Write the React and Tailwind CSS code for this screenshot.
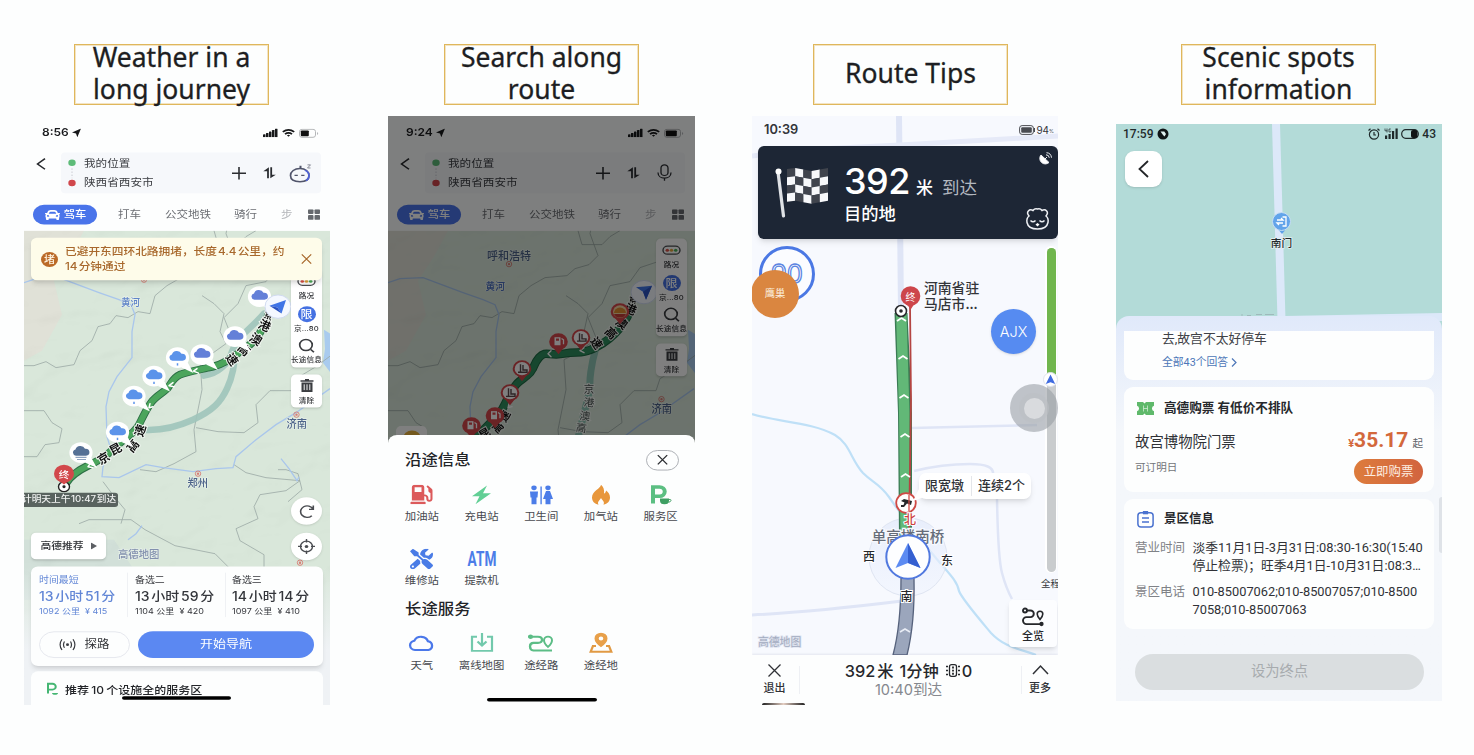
import React from "react";
import { FaCar, FaGasPump, FaTools } from "react-icons/fa";

const CN = "font-['Inter','Noto_Sans_CJK_SC',sans-serif]";
const ROBOTO = "font-['Roboto','Noto_Sans_CJK_SC',sans-serif]";
const MAP_FONT = "'Noto Sans CJK SC', sans-serif";

function Title({ children, className }) {
  return (
    <h2
      className={
        "flex h-[61px] w-[195px] items-center justify-center border border-[#dfb75c] pb-[3px] text-center font-['Noto_Sans'] text-[26.500px] leading-[32px] whitespace-nowrap text-[#1d1e22] shadow-[inset_0_0_0_1px_rgba(230,198,124,0.45)] [-webkit-text-stroke:0.3px_#1d1e22] " +
        className
      }
    >
      {children}
    </h2>
  );
}

/* ---------- shared pieces of the route planner ---------- */

function Battery({ level }) {
  return (
    <svg width="20" height="11" viewBox="0 0 20 11">
      <rect x="0.5" y="1" width="16" height="9" rx="2.5" fill="none" stroke="#b0b2b5" strokeWidth="1" />
      <rect x="1.8" y="2.3" width={level} height="6.4" rx="1" fill="#111" />
      <path d="M18 4v3.4q1.2-.6 1.2-1.7T18 4" fill="#b5b7ba" />
    </svg>
  );
}

function PlannerHeader({ time, level, last }) {
  return (
    <header className="bg-[#fdfefe]">
      <div className="flex h-[38px] items-center pl-[18px] pr-[11px]">
        <span className="text-[12px] font-semibold text-[#1b1c1f]">{time}</span>
        <svg className="ml-[3px]" width="9" height="10" viewBox="0 0 9 10" fill="#17181a">
          <path d="M9 0 5.300 10 4 5.600 0 4.500z" />
        </svg>
        <div className="ml-auto flex items-center gap-[4px]">
          <svg width="15" height="10" viewBox="0 0 15 10" fill="#17181a">
            <rect x="0" y="6.500" width="2.500" height="3.500" rx=".5" />
            <rect x="3" y="5" width="2.500" height="5" rx=".5" />
            <rect x="6" y="3.500" width="2.500" height="6.500" rx=".5" />
            <rect x="9" y="1.700" width="2.500" height="8.300" rx=".5" />
            <rect x="12" y="0" width="2.500" height="10" rx=".5" />
          </svg>
          <svg width="13" height="10" viewBox="0 0 13 9" fill="none" stroke="#17181a" strokeWidth="1.900">
            <path d="M.8 3.300Q6.500-1.300 12.200 3.300M3 5.800Q6.500 3 10 5.800" />
            <path d="M4.900 7.200Q6.500 6 8.100 7.200L6.500 8.900z" fill="#17181a" stroke="none" />
          </svg>
          <Battery level={level} />
        </div>
      </div>
      <div className="mt-[3px] flex pl-[12px]">
        <svg className="mt-[6px] mr-[15px]" width="10" height="14" viewBox="0 0 10 14" fill="none" stroke="#26282c" strokeWidth="1.600">
          <path d="M9 1 1.500 7 9 13" />
        </svg>
        <div className="flex h-[46px] w-[260px] items-center rounded-[4px] bg-[#f6f8fb]">
          <svg className="ml-[7px]" width="8" height="32" viewBox="0 0 8 32">
            <circle cx="4" cy="4.700" r="3.700" fill="#5dbb78" />
            <path d="M4 11v11" stroke="#c3c6cc" strokeWidth="1" strokeDasharray="1.500 2" />
            <circle cx="4" cy="27.500" r="3.700" fill="#d0474c" />
          </svg>
          <div className="ml-[8px] text-[11.600px] leading-[22.500px] text-[#3b3d42]">
            <div>我的位置</div>
            <div>陕西省西安市</div>
          </div>
          <div className="ml-auto flex items-center pr-[9px] text-[#2b2d31]">
            <svg width="14" height="15" viewBox="0 0 14 15" stroke="currentColor" strokeWidth="1.600">
              <path d="M7 .500v14M0 7.500h14" />
            </svg>
            <svg className="ml-[17px]" width="13" height="14" viewBox="0 0 13 14" fill="currentColor">
              <path d="M5.900 .800v12.400H4.100V5.200H.300zM7.300 .800h1.800v8.200h3.700l-5.500 4.200z" />
            </svg>
            {last === "robot" ? (
              <svg className="ml-[13px]" width="23" height="23" viewBox="0 0 23 23" fill="none">
                <path d="M11 6C16.500 6 20 9.500 20 14S17.500 21 11 21 1.500 18.500 1.500 14 5.500 6 11 6z" stroke="#50546a" strokeWidth="1.700" />
                <path d="M16 8c2.600 1.400 4 3.500 4 6.200 0 2.600-1 4.300-3 5.500" stroke="#4f62d8" strokeWidth="1.700" />
                <path d="M11.500 5.500V3" stroke="#50546a" strokeWidth="2" />
                <path d="M5.500 13.800h3.300M12.200 13.800h3.300" stroke="#50546a" strokeWidth="1.500" />
                <path d="M18.500 2h3l-3 3.500h3" stroke="#777a88" strokeWidth=".9" />
              </svg>
            ) : (
              <svg className="mr-[4px] ml-[17px]" width="15" height="20" viewBox="0 0 15 20" fill="none" stroke="currentColor" strokeWidth="1.300">
                <rect x="4" y="1" width="7" height="12" rx="3.500" />
                <path d="M1 9.500c0 4 2.800 6.500 6.500 6.500s6.500-2.500 6.500-6.500M7.500 16v3" />
              </svg>
            )}
          </div>
        </div>
      </div>
      <nav className="mt-[13px] flex h-[29.400px] items-start pl-[9px] text-[11.500px] leading-[22px] text-[#6b6e73]">
        <div className="flex h-[22px] w-[64px] items-center justify-center gap-[3px] rounded-full bg-[#4a74ea] font-medium text-white">
          <FaCar className="h-[15px] w-[17px]" />
          <span className="text-[11.300px]">驾车</span>
        </div>
        <span className="ml-[21px]">打车</span>
        <span className="ml-[24px]">公交地铁</span>
        <span className="ml-[23px]">骑行</span>
        <span className="ml-[24px] text-[#b4b6ba]">步</span>
        <svg className="mt-[5px] ml-[15px]" width="12" height="12" viewBox="0 0 12 12" fill="#66696e">
          <rect width="5.500" height="5.300" rx="1" />
          <rect x="6.500" width="5.500" height="5.300" rx="1" />
          <rect y="6.500" width="5.500" height="5.300" rx="1" />
          <rect x="6.500" y="6.500" width="5.500" height="5.300" rx="1" />
        </svg>
      </nav>
    </header>
  );
}

function ToolRail({ className }) {
  return (
    <div className={"absolute w-[31px] text-center text-[7.700px] font-medium text-[#2e3034] " + className}>
      <div className="flex h-[110px] flex-col items-center rounded-[5px] bg-white shadow-sm">
        <svg className="mt-[7px]" width="19" height="12" viewBox="0 0 19 12">
          <rect x="1" y="1.500" width="17" height="9" rx="4.500" fill="#fff" stroke="#4a4c50" strokeWidth="1.400" />
          <circle cx="5.300" cy="6" r="1.700" fill="#dd5348" />
          <circle cx="9.500" cy="6" r="1.700" fill="#e5a53c" />
          <circle cx="13.700" cy="6" r="1.700" fill="#4cae5a" />
        </svg>
        <div className="mt-[5px] leading-[12px]">路况</div>
        <div className="mt-[5px] flex h-[18px] w-[18px] items-center justify-center rounded-full bg-[#4571e2] text-[12px] text-white">限</div>
        <div className="mt-[1px] leading-[13px] tracking-[0.200px]">京…80</div>
        <svg className="mt-[4px]" width="17" height="17" viewBox="0 0 16 16" fill="none" stroke="#3b3d41" strokeWidth="1.600">
          <circle cx="7.500" cy="7.300" r="5.900" />
          <path d="m12 12 3 3" />
        </svg>
        <div className="mt-[2px] leading-[12px] whitespace-nowrap">长途信息</div>
      </div>
      <div className="mt-[8px] flex h-[37px] flex-col items-center rounded-[5px] bg-white shadow-sm">
        <svg className="mt-[5px]" width="14" height="15" viewBox="0 0 14 15" fill="#3b3d41">
          <path d="M5 0h4v1.500h4.500V3H.500V1.500H5zM1.500 4h11v10.500h-11z" />
          <path d="M4.200 6v6.500M7 6v6.500M9.800 6v6.500" stroke="#fff" strokeWidth="1" />
        </svg>
        <div className="mt-[4px] leading-[12px]">清除</div>
      </div>
    </div>
  );
}

function ReliefFilter({ id, seed }) {
  return (
    <filter id={id} x="0" y="0" width="100%" height="100%">
      <feTurbulence type="fractalNoise" baseFrequency="0.018 0.028" numOctaves="3" seed={seed} />
      <feDiffuseLighting surfaceScale="5" diffuseConstant="1.150" lightingColor="#ffffff">
        <feDistantLight azimuth="225" elevation="60" />
      </feDiffuseLighting>
    </filter>
  );
}

/* Provincial borders and rivers of the northern China base map, x measured from the phone's left edge */
function BaseMap({ filter }) {
  return (
    <g>
      <rect x="0" y="231" width="308" height="474" fill="#d9e7da" />
      <path d="M0 231h60l-14 26-16 24 8 34-20 36-18 10z" fill="#e2ded6" opacity=".7" />
      <path d="M0 540h90l40 60H0z" fill="#cbdad7" opacity=".5" />
      <rect x="0" y="231" width="308" height="474" filter={"url(#" + filter + ")"} opacity=".15" style={{ mixBlendMode: "multiply" }} />
      <path d="M300 330l8 5v40l-9-12 2-14z" fill="#a9cbee" />
      <g fill="none" stroke="#9aa8a4" strokeWidth=".8">
        <path d="M0 366l10 0 12-4 10 6 18-3 6-14 12-10 6-14 12-3 6-8 12 2 10-6 12 2 5-18 12-10 14-8 22-2 8-7 14-4 9-9-8-22 4-20" />
        <path d="M0 411h20l8 12 10 6-3 14-14 2-8 12H0" />
        <path d="M178 296l12 8 10 10-4 18 6 12-14 10-12 6 2 30-8 40 2 22-22 12-18 8-16-2" />
        <path d="M208 338l-8-20 14-14 8-18 20-4 10-14 24-8 12-18" />
        <path d="M172 428l22 4 26 1 14-10-2-18 14-14 22 0 4-12 20-12 16-12" />
        <path d="M210 465l12 8 20 5 34 3-14 10-26 4-6 12 4 12-22 10 4 12 24 14v34" />
        <path d="M55 524l10-4 42 0 14 10 30 16 40 8 14 14 20 2" />
        <path d="M79 482l12 16 10 12-4 14" />
        <path d="M254 470l8 0 12 4 4 16-14 12M190 231l4 14 20 0 8-8 10-6" />
      </g>
      <g fill="none" stroke="#a9c6ec" strokeWidth="1.300">
        <path d="M0 283l12-4 23-1 24 9 16 6 20 7 12 5 4 10-3 17v26l-15 19-8 15-3 15 1 30 4 13-8 17-1 10 17 1 27-13 17 3 30 4 23-3 17-1 3-11 20-17 20-15 20-12 34-24" />
        <path d="M257 459l8 10 8 12 2-4M104 540l8-6 6-8" />
      </g>
    </g>
  );
}

function MapLabel({ x, y, w, children, fill = "#4c6389", size = 11 }) {
  return (
    <text x={x} y={y} textLength={w} lengthAdjust="spacingAndGlyphs" fontSize={size} fill={fill} fontFamily={MAP_FONT} fontWeight="500" stroke="#e8f1ea" strokeWidth="1.200" paintOrder="stroke">
      {children}
    </text>
  );
}

function City({ x, y }) {
  return (
    <g fill="none" stroke="#d77a72">
      <circle cx={x} cy={y} r="2.700" strokeWidth=".9" />
      <circle cx={x} cy={y} r=".7" strokeWidth="1" />
    </g>
  );
}

function RoadGlyph({ x, y, r = 0, children, size = 12, light = false }) {
  return (
    <text
      transform={"translate(" + x + " " + y + ") rotate(" + r + ")"}
      textAnchor="middle"
      dominantBaseline="central"
      fontSize={size}
      fontWeight={light ? "400" : "700"}
      fill={light ? "#4b5553" : "#111"}
      stroke="#f2f7f2"
      strokeWidth="2"
      paintOrder="stroke"
      fontFamily={MAP_FONT}
    >
      {children}
    </text>
  );
}

function WeatherBubble({ x, y, kind }) {
  const fill = kind === "cloud" ? "#6480d8" : kind === "fog" ? "#557095" : "#5b93ea";
  return (
    <g transform={"translate(" + x + " " + y + ") scale(1 .9)"}>
      <path d="M4 11 16 17 10 5z" fill="#fff" />
      <circle r="11.600" fill="#fff" />
      <path d="M-5 3.500a3.600 3.600 0 0 1-.5-7A5 5 0 0 1 4-4.300 3.900 3.900 0 0 1 5 3.500z" fill={fill} />
      {kind === "rain" && <path d="M0 6.200v2.600" stroke={fill} strokeWidth="1.500" />}
      {kind === "fog" && <path d="M-5.500 5.200h11M-4 7.600h9" stroke="#8ea2bf" strokeWidth="1.200" />}
    </g>
  );
}

function HeadingMarker({ x, y }) {
  return (
    <g transform={"translate(" + x + " " + y + ") scale(1 .9)"}>
      <circle r="13" fill="#f4f8ff" stroke="#cfd9ef" strokeWidth="1" />
      <path d="M-8.500-1 8-7.500 3.500 7.500-.5 1z" fill="#3f74e6" />
      <path d="M-8.500-1 3.500 7.500-.5 1z" fill="#2a52c0" />
    </g>
  );
}

/* ---------- phone 1 : weather ---------- */

function WeatherMap() {
  const route =
    "M245 313C240 328 234 340 222 348s-20 16-33 19-26 5-33 8-9 9-12 13-12 8-17 15-8 14-12 22-16 15-23 22-13 11-20 15-24 10-30 22";
  return (
    <svg className="absolute inset-0 h-full w-full" viewBox="0 231 306 474" preserveAspectRatio="none">
      <defs>
        <ReliefFilter id="relief-a" seed={4} />
      </defs>
      <BaseMap filter="relief-a" />
      <MapLabel x={97} y={306.500} w={19} fill="#5f83c8" size={10}>黄河</MapLabel>
      <City x={120} y={280} />
      <City x={126} y={377} />
      <City x={174} y={474} />
      <MapLabel x={163.500} y={487.500} w={20.500}>郑州</MapLabel>
      <City x={272.500} y={415} />
      <MapLabel x={262.500} y={428.500} w={20.500}>济南</MapLabel>
      <City x={276} y={563} />
      <g fill="none" strokeLinecap="round" strokeLinejoin="round">
        <path d="M240 314C226 330 212 338 208 352c-3 12-14 22-28 24M211 350c0 12-2 26-8 39s-14 22-34 31-36 11-50 10" stroke="#9fc4ba" strokeWidth="6.500" opacity=".9" />
        <path d={route} stroke="#2c6e45" strokeWidth="7.800" />
        <path d={route} stroke="#4ba55c" strokeWidth="6" />
        <path d="M173 369l-3.500 2.500 5 2M149 383l-4 3 5 1M126 404l-1 4 4-1M67 463l-3 4 5 1" stroke="#fff" strokeWidth="1.500" />
      </g>
      <RoadGlyph x={244.500} y={316} r={20} size={9}>京</RoadGlyph>
      <RoadGlyph x={241} y={325} r={25}>港</RoadGlyph>
      <RoadGlyph x={232.500} y={338.500} r={32}>澳</RoadGlyph>
      <RoadGlyph x={221} y={349} r={42}>高</RoadGlyph>
      <RoadGlyph x={209} y={359} r={55}>速</RoadGlyph>
      <RoadGlyph x={79} y={457.500} r={-32}>京</RoadGlyph>
      <RoadGlyph x={91} y={448.500} r={-28}>昆</RoadGlyph>
      <RoadGlyph x={108} y={445.500} r={-50}>高</RoadGlyph>
      <RoadGlyph x={115} y={430.500} r={-72}>速</RoadGlyph>
      <WeatherBubble x={235.500} y={297} kind="cloud" />
      <WeatherBubble x={211} y={337} kind="cloud" />
      <WeatherBubble x={178} y={355} kind="cloud" />
      <WeatherBubble x={153.500} y={358} kind="rain" />
      <WeatherBubble x={130} y={376.500} kind="rain" />
      <WeatherBubble x={110} y={396.500} kind="rain" />
      <WeatherBubble x={93.500} y={432.500} kind="rain" />
      <WeatherBubble x={57} y={453} kind="fog" />
      <HeadingMarker x={254} y={307} />
      <g transform="translate(40 474) scale(1 .9)">
        <circle cy="14.500" r="5.500" fill="#fff" stroke="#222" strokeWidth="1.400" />
        <circle cy="14.500" r="1.600" fill="#222" />
        <path d="M0 12-6 7h12z" fill="#d2484b" />
        <circle r="10" fill="#d2484b" />
        <text textAnchor="middle" dominantBaseline="central" fontSize="10.500" fontWeight="500" fill="#fff" fontFamily={MAP_FONT}>终</text>
      </g>
      <MapLabel x={94} y={558.500} w={41.500} fill="#8290ae" size={10.500}>高德地图</MapLabel>
    </svg>
  );
}

function RouteOption({ className, label, time, sub }) {
  return (
    <div className={"whitespace-nowrap " + className}>
      <div className="text-[9.900px] leading-[16px]">{label}</div>
      <div className="text-[14px] leading-[22px] font-medium [word-spacing:-2px]">{time}</div>
      <div className="text-[9px] leading-[12px]">{sub}</div>
    </div>
  );
}

function WeatherPhone() {
  return (
    <div className="h-[589px] w-[306px] overflow-hidden">
      <div className={"flex h-[663px] w-[306px] origin-top scale-y-[0.8885] flex-col " + CN}>
        <PlannerHeader time="8:56" level={8} last="robot" />
        <div className="relative flex-1 overflow-hidden">
          <WeatherMap />
          <ToolRail className="top-[44px] left-[267px]" />
          <div className="absolute top-[8px] left-[7px] flex h-[48px] w-[291px] items-center rounded-[6px] bg-[#fefcea] pr-[10px] pl-[10px] text-[#a8682c] shadow-md">
            <div className="flex h-[17px] w-[17px] items-center justify-center rounded-full bg-[#bb6a28] text-[11px] font-medium text-[#fff6e4]">堵</div>
            <p className="ml-[7px] text-[11.700px] leading-[17.500px] font-medium whitespace-nowrap [word-spacing:-2px]">
              已避开东四环北路拥堵，长度 4.4 公里，约
              <br />
              14 分钟通过
            </p>
            <svg className="ml-auto" width="11" height="12" viewBox="0 0 11 12" stroke="#a8682c" strokeWidth="1.200">
              <path d="m.8.800 9.400 10.400M10.200.800.8 11.200" />
            </svg>
          </div>
          <div className="absolute top-[295px] left-0 h-[16px] w-[94px] overflow-hidden rounded-r-[3px] bg-[#59635f] text-[9.700px] leading-[15.500px] font-medium whitespace-nowrap text-[#f1f3f2] [word-spacing:-2px]">
            <span className="-ml-[2px]">计明天上午 10:47 到达</span>
          </div>
          <div className="absolute top-[340px] left-[7px] flex h-[30px] w-[75px] items-center justify-center gap-[7px] rounded-[5px] bg-white text-[10.800px] font-medium text-[#2d2f33] shadow-sm">
            高德推荐
            <svg width="6" height="8" viewBox="0 0 6 8" fill="#5c5f64">
              <path d="M0 0v8l6-4z" />
            </svg>
          </div>
          <div className="absolute top-[300px] left-[267px] flex h-[31px] w-[31px] items-center justify-center rounded-full bg-white shadow-sm">
            <svg width="16" height="16" viewBox="0 0 16 16" fill="none" stroke="#4a4c51" strokeWidth="1.600">
              <path d="M12.800 12.800A6.500 6.500 0 1 1 14 5.500M14.300 1.500v4.200h-4.300" />
            </svg>
          </div>
          <div className="absolute top-[340px] left-[267px] flex h-[31px] w-[31px] items-center justify-center rounded-full bg-white shadow-sm">
            <svg width="17" height="17" viewBox="0 0 17 17" fill="none" stroke="#4a4c51" strokeWidth="1.400">
              <circle cx="8.500" cy="8.500" r="6" />
              <path d="M8.500 0v4M8.500 13v4M0 8.500h4M13 8.500h4" />
              <circle cx="8.500" cy="8.500" r="1.800" fill="#4a4c51" stroke="none" />
            </svg>
          </div>
          <div className="absolute inset-x-0 bottom-0 flex flex-col bg-linear-to-b from-transparent to-[#eff2f5] to-60% px-[7px]">
            <section className="h-[112px] rounded-[7px] bg-[#fdfefe] pt-[7px] shadow-md">
              <div className="grid grid-cols-[96px_98px_97px] text-[#34363b]">
                <RouteOption className="pl-[8px] text-[#6186d6]" label="时间最短" time="13 小时 51 分" sub={"1092 公里 \u00a0¥ 415"} />
                <RouteOption className="border-l border-[#eff1f4] pl-[7px]" label="备选二" time="13 小时 59 分" sub={"1104 公里 \u00a0¥ 420"} />
                <RouteOption className="border-l border-[#eff1f4] pl-[6px]" label="备选三" time="14 小时 14 分" sub={"1097 公里 \u00a0¥ 410"} />
              </div>
              <div className="mt-[16px] flex gap-[8px] px-[8px]">
                <button className="flex h-[30px] w-[91px] items-center justify-center gap-[8px] rounded-full border border-[#e4e7ed] text-[12.500px] text-[#303236]">
                  <svg width="17" height="14" viewBox="0 0 17 14" fill="none" stroke="#3b3d42" strokeWidth="1.200">
                    <circle cx="8.500" cy="7" r="1.500" fill="#3b3d42" stroke="none" />
                    <path d="M5.500 3.500Q3.500 7 5.500 10.500M11.500 3.500q2 3.500 0 7M3 1Q-.8 7 3 13M14 1q3.800 6 0 12" />
                  </svg>
                  探路
                </button>
                <button className="h-[30px] w-[176px] rounded-full bg-[#5b88f2] text-[13px] text-white">开始导航</button>
              </div>
            </section>
            <section className="relative mt-[6px] flex h-[38px] rounded-t-[7px] bg-[#fdfefe] pt-[12px] pl-[15px]">
              <svg width="13" height="16" viewBox="0 0 13 16" fill="none" stroke="#45b673" strokeWidth="2">
                <path d="M2 13V2h4.500a3 3 0 0 1 0 6.500H2" />
                <path d="M6 12.500h6q0 2-3 2t-3-2" fill="#45b673" stroke="none" />
              </svg>
              <span className="ml-[6px] text-[12px] leading-[17px] font-medium text-[#232529] [word-spacing:-1px]">推荐 10 个设施全的服务区</span>
              <div className="absolute top-[28px] left-[91px] h-[4px] w-[109px] rounded-full bg-black" />
            </section>
          </div>
        </div>
      </div>
    </div>
  );
}

/* ---------- phone 2 : search along route ---------- */

function PoiMarker({ x, y, kind }) {
  return (
    <g transform={"translate(" + x + " " + y + ") scale(1 .9)"}>
      <path d="M0 14-5 7H5z" fill="#d5464b" />
      <circle r="9.300" fill="#d5464b" />
      {kind === "gas" ? (
        <g>
          <path d="M-4-5h6v9h-6z" fill="#fff" />
          <path d="M-2.500-3.500h3v2.500h-3z" fill="#d5464b" />
          <path d="M3-3.500 5-2v5" fill="none" stroke="#fff" strokeWidth="1.300" />
        </g>
      ) : kind === "oil" ? (
        <g>
          <circle r="7" fill="#f2d3a0" />
          <path d="M-6 1.500A6 6 0 0 1 6 1.500z" fill="#e08a2e" />
          <path d="M-6 2.500h12A6.500 6.500 0 0 1-6 2.500" fill="#c43c36" />
        </g>
      ) : (
        <g>
          <circle r="7.300" fill="#fff" />
          <path d="M-1.500-5v9M-4 4H5V1.500H1V-4" fill="none" stroke="#5c4a4c" strokeWidth="1.400" />
        </g>
      )}
    </g>
  );
}

function SearchMap() {
  const route = "M244 305C240 322 226 338 209 347s-18 4-33 7-18-4-25 4-4 12-12 18-12 8-18 20-5 12-10 18-12 12-25 26";
  return (
    <svg className="absolute inset-0 h-full w-full" viewBox="0 231 307 474" preserveAspectRatio="none">
      <defs>
        <ReliefFilter id="relief-b" seed={4} />
      </defs>
      <BaseMap filter="relief-b" />
      <MapLabel x={99} y={260} w={44} size={11.500}>呼和浩特</MapLabel>
      <City x={121} y={264.500} />
      <MapLabel x={97.500} y={290} w={19.500} fill="#4a6fbe" size={10}>黄河</MapLabel>
      <City x={273.500} y={399.500} />
      <MapLabel x={263.500} y={413} w={20.500}>济南</MapLabel>
      <g fill="none" strokeLinecap="round" strokeLinejoin="round">
        <path d="M208 348C204 362 201 375 202 390l-12 48" stroke="#8fc4b4" strokeWidth="7" />
        <path d={route} stroke="#1d6a44" strokeWidth="8.500" />
        <path d={route} stroke="#2f8f5e" strokeWidth="6.500" />
        <path d="M163 351l-3 3 3 3M196 348l-4 3 4 2M121 404l-1 4 4-1" stroke="#fff" strokeWidth="1.400" />
      </g>
      <RoadGlyph x={245} y={301} r={15} size={9}>京</RoadGlyph>
      <RoadGlyph x={243} y={309} r={22} size={11.500}>港</RoadGlyph>
      <RoadGlyph x={234} y={323} r={36} size={11.500}>澳</RoadGlyph>
      <RoadGlyph x={223.500} y={333} r={45} size={11.500}>高</RoadGlyph>
      <RoadGlyph x={209} y={343} r={56} size={11.500}>速</RoadGlyph>
      <RoadGlyph x={201} y={388.500} size={10.500} light>京</RoadGlyph>
      <RoadGlyph x={201} y={402} r={5} size={10.500} light>港</RoadGlyph>
      <RoadGlyph x={197} y={415.500} r={8} size={10.500} light>澳</RoadGlyph>
      <RoadGlyph x={193.500} y={427.500} r={10} size={10.500} light>高</RoadGlyph>
      <RoadGlyph x={116} y={416} r={-60} size={11}>速</RoadGlyph>
      <RoadGlyph x={109} y={427} r={-45} size={11}>高</RoadGlyph>
      <RoadGlyph x={96} y={433} r={-30} size={11}>昆</RoadGlyph>
      <PoiMarker x={193} y={338} kind="rest" />
      <PoiMarker x={170.500} y={342} kind="gas" />
      <PoiMarker x={134} y={369} kind="rest" />
      <PoiMarker x={122} y={393} kind="rest" />
      <PoiMarker x={107} y={416} kind="gas" />
      <PoiMarker x={83.500} y={426} kind="gas" />
      <PoiMarker x={232} y={312} kind="oil" />
      <g transform="translate(256 292.500) scale(1 .9)">
        <circle r="13" fill="#f4f8ff" stroke="#cfd9ef" />
        <path d="M-8-5.500 8-7 2 8.500-1-.5z" fill="#3f74e6" />
        <path d="M8-7 2 8.500-1-.5z" fill="#2a52c0" />
      </g>
    </svg>
  );
}

const POI = [
  ["加油站", <FaGasPump className="h-[22px] w-[23px] text-[#dc5a5b]" />],
  ["充电站", <svg width="21" height="23" viewBox="0 0 21 23" fill="#62cf95"><path d="M16 1 1 13h7.500L4.500 22 20 9.500h-8z" /></svg>],
  ["卫生间", <svg width="24" height="23" viewBox="0 0 24 23" fill="#4c7de8"><circle cx="5" cy="3.500" r="2.700" /><path d="M1 7.500h8l-.5 7H7.500V22h-5v-7.500H1.500zM11.400 2h1.400v20h-1.400z" /><circle cx="19" cy="3.500" r="2.700" /><path d="M17 7h4l3 9h-2.500v6h-5v-6H14z" /></svg>],
  ["加气站", <svg width="20" height="23" viewBox="0 0 20 23" fill="#e8973c"><path d="M10 0c0 4-9 7-9 14.500C1 18.500 3.500 22 7.500 22.500 6 19 8.500 18 10 15c1.500 3 4 4 2.500 7.500 4-.5 6.500-4 6.500-8 0-4-2-6.500-4-8-.2 2-.8 3-2 3.500C13.500 6 12.500 2 10 0z" /></svg>],
  ["服务区", <svg width="23" height="24" viewBox="0 0 23 24" fill="none"><path d="M4 22V3.500h6.500a5 5 0 0 1 0 10.500H4" stroke="#5cbf82" strokeWidth="4" /><path d="M11 16.500h9v2.500q0 4-4.500 4T11 19z" fill="#3f9f63" /><path d="M20 17.500q2.500 0 2 1.500t-2.500 1.700" stroke="#3f9f63" /></svg>],
  ["维修站", <FaTools className="h-[23px] w-[23px] text-[#4a7ce6]" />],
  ["提款机", <span className="origin-center scale-x-[0.720] scale-y-[1.150] font-['Roboto'] text-[19px] leading-none font-bold text-[#4c7de8]">ATM</span>],
];

const SERVICE = [
  ["天气", <svg width="27" height="20" viewBox="0 0 27 20" fill="none" stroke="#4b78ea" strokeWidth="2.300"><path d="M7 18a5.300 5.300 0 0 1-.6-10.500A7.300 7.300 0 0 1 20 8.300 5 5 0 0 1 20.500 18z" /></svg>],
  ["离线地图", <svg width="24" height="22" viewBox="0 0 24 22" fill="none" stroke="#72c9ac" strokeWidth="2.200"><path d="M7 4H2v16h20V4h-5M12 0v13M7.500 9.500 12 14l4.500-4.500" /></svg>],
  ["途经路", <svg width="26" height="21" viewBox="0 0 26 21" fill="none" stroke="#5cbd86" strokeWidth="2.300"><circle cx="2.500" cy="3" r="1.400" fill="#5cbd86" /><path d="M3 3h7q4 0 4 3.500T10 10H5.500Q2 10 2 14t3.500 4.500H24" /><path d="M20 14.500q-4-4-4-7.500a4 4 0 0 1 8 0q0 3.500-4 7.500z" strokeWidth="2" /></svg>],
  ["途经地", <svg width="24" height="24" viewBox="0 0 24 24" fill="none" stroke="#e19a44"><path fillRule="evenodd" d="M12 17Q5.500 11.500 5.500 7a6.500 6.500 0 0 1 13 0q0 4.500-6.500 10zM12 4.700a2.300 2.300 0 1 0 0 4.600 2.300 2.300 0 0 0 0-4.600z" fill="#e8a04a" stroke="none" /><path d="M7 15.500H4L1.700 22h20.600L20 15.500h-3" strokeWidth="2.300" /></svg>],
];

function IconGrid({ items, className }) {
  return (
    <ul className={"grid grid-cols-[repeat(5,59.700px)] " + className}>
      {items.map(([label, icon]) => (
        <li key={label} className="flex h-[47px] flex-col items-center">
          <span className="flex h-[28px] items-center justify-center">{icon}</span>
          <span className="mt-[3px] text-[11.400px] leading-[18px] whitespace-nowrap text-[#47494e]">{label}</span>
        </li>
      ))}
    </ul>
  );
}

function SearchPhone() {
  return (
    <div className="h-[589px] w-[307px] overflow-hidden">
      <div className={"relative flex h-[663px] w-[307px] origin-top scale-y-[0.8885] flex-col " + CN}>
        <PlannerHeader time="9:24" level={11} last="mic" />
        <div className="relative flex-1 overflow-hidden">
          <SearchMap />
          <ToolRail className="top-[9px] left-[268px]" />
          <div className="absolute top-[220px] left-[8px] flex h-[31px] w-[31px] justify-center rounded-[5px] bg-white pt-[5px]">
            <div className="h-[18px] w-[18px] rounded-full bg-[#e9b23c]" />
          </div>
        </div>
        <div className="absolute inset-0 bg-black/50" />
        <section className="absolute inset-x-0 bottom-0 h-[304px] rounded-t-[9px] bg-[#fdfefe]">
          <div className="flex items-center justify-between pt-[16px] pr-[16px] pl-[17px]">
            <h3 className="text-[16.400px] leading-[24px] font-medium text-[#222428]">沿途信息</h3>
            <button className="flex h-[23px] w-[33px] items-center justify-center rounded-full border border-[#a9acb1]">
              <svg width="11" height="12" viewBox="0 0 11 12" stroke="#2c2e32" strokeWidth="1.300">
                <path d="m.8.800 9.400 10.400M10.200.800.8 11.200" />
              </svg>
            </button>
          </div>
          <IconGrid items={POI} className="mt-[14px] ml-[4px] gap-y-[25px]" />
          <h3 className="mt-[11px] pl-[17px] text-[16.400px] leading-[24px] font-medium text-[#222428]">长途服务</h3>
          <IconGrid items={SERVICE} className="mt-[13px] ml-[4px]" />
          <div className="mx-auto mt-[28px] h-[4px] w-[110px] rounded-full bg-black" />
        </section>
      </div>
    </div>
  );
}

/* ---------- phone 3 : navigation ---------- */

function NavMap() {
  const t = { fontFamily: MAP_FONT, textAnchor: "middle", dominantBaseline: "central" };
  return (
    <svg className="absolute inset-0" width="306" height="589" viewBox="752 116 306 589">
      <defs>
        <linearGradient id="halo" x1="0" y1="0" x2="0" y2="1">
          <stop offset="0" stopColor="#e4ebfb" stopOpacity=".8" />
          <stop offset="1" stopColor="#eef3fe" stopOpacity=".5" />
        </linearGradient>
      </defs>
      <rect x="752" y="116" width="306" height="589" fill="#f7f9fe" />
      <g fill="none" stroke="#dfe5f6">
        <path d="M899 116 901 312" strokeWidth="6" />
        <path d="M752 156 800 150 900 145 1058 136" strokeWidth="5" stroke="#e6eaf8" />
        <path d="M912 428 1037 425M914 471q28-7 56-7 24 0 23 10M997 498q1 60 5 75 4 15 10 26" strokeWidth="2.500" />
        <path d="M752 615q60-3 150-14" strokeWidth="3" />
      </g>
      <path d="M752 414c24 8 60 8 83 21 15 9 16 25 28 38 10 10 16 10 26 24 18 26 28 38 42 55 14 18 26 27 28 39 3 8 22 30 32 42 14 15 30 16 45 22" fill="none" stroke="#bfe0f7" strokeWidth="2.200" />
      <circle cx="908" cy="557" r="39" fill="url(#halo)" stroke="#dfe5f2" />
      <path d="M894.500 313h13l4.500 100v125h-13l-1-125z" fill="#3b7c55" />
      <path d="M896 313h10.500l3 100v125h-9l-1.500-125z" fill="#62b877" />
      <path d="M910 304 911 400 909 536" fill="none" stroke="#b44542" strokeWidth="1.800" />
      <g fill="none" stroke="#fff" strokeWidth="1.700">
        <path d="m897 321 4.500-3 4.500 3M898.500 359l4.500-3 4.500 3M899.500 398l4.500-3 4.500 3M900.500 437l4.500-3 4.500 3M901 477l4.500-3 4.500 3" />
      </g>
      <path d="M901 578h13q1 45-7 77h-14q8-30 8-77" fill="#9ba6bc" stroke="#56627c" strokeWidth="1.300" />
      <path d="m900 632 5-3 5 3" fill="none" stroke="#e9edf5" strokeWidth="1.600" />
      <circle cx="901" cy="311" r="5.500" fill="#fff" stroke="#26282b" strokeWidth="1.600" />
      <circle cx="901" cy="311" r="1.800" fill="#26282b" />
      <path d="m905 303 6 6 4-6z" fill="#cd464b" />
      <circle cx="910.500" cy="296" r="9.800" fill="#cd464b" />
      <text {...t} x="910.500" y="296" fontSize="10" fill="#fff">终</text>
      <g fontFamily={MAP_FONT} fontSize="13.800" fontWeight="500" fill="#333539" stroke="#f7f9fe" strokeWidth="2" paintOrder="stroke">
        <text x="924" y="293">河南省驻</text>
        <text x="924" y="309">马店市...</text>
      </g>
      <circle cx="906" cy="503" r="9.800" fill="#fff" stroke="#cf4a45" strokeWidth="1.800" />
      <path d="m901 501 3-2 8 2-1 4-4-1.500-3 3.500h-3v-2h2.500l1-2.500z" fill="#26282b" />
      <path d="M909 495v16" stroke="#cf4a45" strokeWidth="1.300" />
      <text {...t} x="908" y="535" fontSize="14.500" fontWeight="500" fill="#666d79" stroke="#f7f9fe" strokeWidth="2.500" paintOrder="stroke">单高楼南桥</text>
      <g {...t} fontSize="12" fontWeight="500" fill="#26282c" stroke="#fff" strokeWidth="2" paintOrder="stroke">
        <text x="910" y="518" fill="#cc403d">北</text>
        <text x="869" y="555">西</text>
        <text x="947" y="559">东</text>
        <text x="906.500" y="595">南</text>
      </g>
      <circle cx="908" cy="557" r="21.700" fill="#fdfeff" stroke="#5179df" strokeWidth="2" />
      <path d="m908 543 12.500 25-12.500-5-12.500 5z" fill="#5c8bf2" />
      <path d="m908 543 12.500 25-12.500-5z" fill="#345fd0" />
      <text x="758" y="645.500" fontSize="10.800" fill="#a4acc0" fontFamily={MAP_FONT} stroke="#dde2ee" strokeWidth="1.500" paintOrder="stroke">高德地图</text>
    </svg>
  );
}

function CheckeredFlag() {
  const cells = [];
  for (let r = 0; r < 4; r++) {
    for (let c = 0; c < 5; c++) {
      const wave = (k) => [1, 0, 1.5, 3, 1.5, 0][k];
      const x = 12 + c * 8.200;
      const y = r * 8.200;
      cells.push(
        <path
          key={r + "-" + c}
          d={"M" + x + " " + (y + wave(c)) + "L" + (x + 8.200) + " " + (y + wave(c + 1)) + "V" + (y + 8.200 + wave(c + 1)) + "L" + x + " " + (y + 8.200 + wave(c)) + "z"}
          fill={(r + c) % 2 ? "#f7f8fa" : "#40444d"}
        />
      );
    }
  }
  return (
    <svg width="54" height="52" viewBox="0 0 54 52">
      <g>{cells}</g>
      <path d="M3 4 8.500 48" stroke="#dfe2e6" strokeWidth="3.200" strokeLinecap="round" />
      <circle cx="3.500" cy="3.500" r="3" fill="#fff" />
    </svg>
  );
}

function NavPhone() {
  return (
    <div className={"relative flex h-[589px] w-[306px] flex-col overflow-hidden " + CN}>
      <NavMap />
      <div className="relative flex h-[27px] items-center pl-[12px] pr-[4px] text-[#33353a]">
        <span className="text-[12.800px] font-semibold">10:39</span>
        <div className="ml-auto flex items-center text-[10px] leading-none">
          <svg width="17" height="10" viewBox="0 0 17 10">
            <rect x=".6" y=".6" width="13.800" height="8.800" rx="2.500" fill="none" stroke="#4a4c52" />
            <rect x="2.200" y="2.200" width="10.600" height="5.600" rx="1" fill="#4a4c52" />
            <path d="M15.500 3v4" stroke="#4a4c52" />
          </svg>
          94<span className="pt-[4px] text-[5px]">%</span>
        </div>
      </div>
      <div className="relative mt-[3px] ml-[6px] flex h-[93px] w-[300px] rounded-[6px] bg-[#1d2635] pt-[22px] pl-[17px] shadow-md">
        <CheckeredFlag />
        <div className="ml-[15px] text-white">
          <div className="-mt-[1px] flex items-baseline leading-[28px]">
            <span className="text-[36px] font-medium tracking-[-0.500px]">392</span>
            <span className="ml-[6px] text-[17px] font-medium">米</span>
            <span className="ml-[9px] text-[17.500px] text-[#b3b8c0]">到达</span>
          </div>
          <div className="mt-[0px] text-[17.300px] leading-[24px] font-medium">目的地</div>
        </div>
        <svg className="absolute top-[6px] right-[6px]" width="13" height="13" viewBox="0 0 13 13" fill="none" stroke="#eef0f4">
          <path d="M2 3a5.500 5.500 0 0 0 8 7.500z" fill="#fff" />
          <path d="m6 7 2-2M7 2.800q3 0 3.300 3M7.500.700q4.500.3 5 5" />
        </svg>
        <svg className="absolute right-[8px] bottom-[8px]" width="25" height="24" viewBox="0 0 25 24" fill="none" stroke="#eef0f4" strokeWidth="1.500">
          <path d="M4 9C.5 5 4.500 1.500 8 3.500q1.800-2.500 4.500-1.500 2.700-1 4.500 1.500c3.500-2 7.500 1.500 4 5.500 1.800 1.500 2.500 3.800 2 6.500-.8 4-4 6.500-10.500 6.500S2.800 19.500 2 15.500C1.500 12.800 2.200 10.500 4 9z" />
          <path d="M5.500 13.500q2.500 2.500 5 0M14.500 13.500q2.500 2.500 5 0" />
          <path d="m10.500 17.500 2-1.500 2 1.500-2 2z" fill="#fff" stroke="none" />
        </svg>
      </div>

      {/* overlays on the navigation canvas */}
      <div className="absolute top-[130px] left-[7px] flex h-[56px] w-[56px] items-center justify-center rounded-full border-[3px] border-[#4b78e4] bg-[#fbfcff]">
        <svg width="36" height="26" viewBox="0 0 36 26">
          <text x="18" y="22" textAnchor="middle" fontSize="26" fill="#fff" stroke="#5c85e2" strokeWidth="1.300" fontFamily="Inter" textLength="32" lengthAdjust="spacingAndGlyphs">90</text>
        </svg>
      </div>
      <div className="absolute top-[154px] -left-[1px] flex h-[48px] w-[48px] items-center justify-center rounded-full bg-[#da8640] text-[10.300px] text-[#fbeedd]">鹰巢</div>
      <div className="absolute top-[193px] left-[239px] flex h-[45px] w-[45px] items-center justify-center rounded-full bg-[#568bf1] text-[14.500px] font-light text-white shadow-sm">AJX</div>
      <div className="absolute top-[130px] left-[293px] h-[327px] w-[12px] rounded-full bg-white p-[1.500px]">
        <div className="h-full w-[9px] overflow-hidden rounded-full bg-[#c9ccce]">
          <div className="h-[128px] bg-[#70b64e]" />
        </div>
      </div>
      <div className="absolute top-[268px] left-[258px] flex h-[48px] w-[48px] items-center justify-center rounded-full bg-[#9a9ea5]/60">
        <div className="flex h-[30px] w-[30px] items-center justify-center rounded-full bg-[#bcc0c5]/60">
          <div className="h-[21px] w-[21px] rounded-full bg-[#d9dbde]" />
        </div>
      </div>
      <svg className="absolute top-[256px] left-[291px]" width="15" height="15" viewBox="0 0 15 15">
        <circle cx="7.500" cy="7.500" r="7" fill="#fff" stroke="#dfe3ec" />
        <path d="m7.500 2.500 4.700 9.500-4.700-1.800L2.800 12z" fill="#3f6be0" />
      </svg>
      <div className="absolute top-[461px] left-[289px] text-[9.500px] leading-[14px] whitespace-nowrap text-[#33353a]">全程</div>
      <div className="absolute top-[357px] left-[167px] flex h-[26px] w-[112px] items-center justify-center rounded-[7px] bg-white text-[13px] font-medium whitespace-nowrap text-[#303237] shadow-md">
        <svg className="absolute top-[16px] -left-[6px]" width="14" height="12" viewBox="0 0 14 12" fill="#fff">
          <path d="M0 12 6 0l8 7z" />
        </svg>
        <span className="relative pr-[7px]">限宽墩</span>
        <span className="border-l border-[#e4e6ea] pl-[6px]">连续2个</span>
      </div>
      <div className="absolute top-[484px] left-[257px] flex h-[47px] w-[48px] flex-col items-center rounded-[4px] bg-[#fcfdff] pt-[7px] text-[11px] font-medium text-[#25272b] shadow-md">
        <svg width="24" height="20" viewBox="0 0 24 20" fill="none" stroke="#25272b" strokeWidth="1.900">
          <circle cx="4" cy="3.500" r="2" />
          <path d="M6 3.500h3.500a3.300 3.300 0 0 1 0 6.600H5.500a3.500 3.500 0 0 0 0 7H19" />
          <path d="M19 12.500q-2.800-3.200-2.800-5.400a2.800 2.800 0 0 1 5.600 0q0 2.200-2.800 5.400z" strokeWidth="1.600" />
          <circle cx="20.500" cy="17" r="1.200" fill="#25272b" />
        </svg>
        <span className="leading-[18px]">全览</span>
      </div>

      <footer className="relative mt-auto flex h-[50px] bg-[#fdfefe] shadow-[0_-1px_2px_rgba(120,130,150,0.15)]">
        <div className="flex w-[47px] flex-col items-center pt-[9px] pr-[2px] text-[11px] font-medium text-[#303237]">
          <svg width="13" height="13" viewBox="0 0 13 13" stroke="#303237" strokeWidth="1.300">
            <path d="m.5.500 12 12M12.500.500l-12 12" />
          </svg>
          <span className="mt-[2px] leading-[18px]">退出</span>
        </div>
        <div className="my-[11px] flex flex-1 flex-col items-center justify-center border-x border-[#eef0f4] pr-[4px] whitespace-nowrap">
          <div className="flex items-center text-[16.300px] leading-[20px] font-medium text-[#26282c]">
            <span>392<span className="ml-[2px]">米</span></span>
            <span className="ml-[6px]">1分钟</span>
            <svg className="mx-[2px] ml-[7px]" width="14" height="13" viewBox="0 0 14 13" fill="none" stroke="#26282c" strokeWidth="1.300">
              <rect x="3.500" y=".7" width="7" height="11.600" rx="2" />
              <path d="M7 2.500v2M7 5.700v1.800M7 8.800v2" strokeWidth="1.800" />
              <path d="M0 2.500h2M0 6.500h2M0 10.500h2M12 2.500h2M12 6.500h2M12 10.500h2" />
            </svg>
            <span>0</span>
          </div>
          <div className="text-[14.600px] leading-[19px] text-[#85888e]">10:40到达</div>
        </div>
        <div className="flex w-[36px] flex-col items-center pt-[9px] text-[11px] font-medium text-[#303237]">
          <svg width="17" height="13" viewBox="0 0 17 13" fill="none" stroke="#303237" strokeWidth="1.500">
            <path d="m1 10 7.500-8 7.500 8" />
          </svg>
          <span className="mt-[2px] leading-[18px]">更多</span>
        </div>
        <div className="absolute bottom-0 left-[10px] h-[2px] w-[43px] rounded-t bg-linear-to-r from-[#222] via-[#e5cfc3] to-[#222]" />
      </footer>
    </div>
  );
}

/* ---------- phone 4 : scenic spot ---------- */

function ScenicPhone() {
  return (
    <div className={"relative flex h-[577px] w-[326px] flex-col overflow-hidden bg-[#b3dbd8] text-[#303237] " + ROBOTO}>
      <svg className="absolute inset-0" width="326" height="220" viewBox="1116 124 326 220">
        <path d="M1272 124h8l5.500 196h-8z" fill="#dce8f9" />
        <path d="M1285 316 1442 313v8h-160z" fill="#dce8f9" />
        <path d="m1277 228 5 6 5-6z" fill="#5da0e8" />
        <circle cx="1281.500" cy="221.500" r="9" fill="#62a4ea" stroke="#c6def4" strokeWidth="1" />
        <g fill="none" stroke="#fff" strokeWidth="1.300">
          <path d="M1282.500 217h3.500v9h-3.500M1277 220h6l-2-2M1283 223h-6l2 2" />
        </g>
        <text x="1281.500" y="247" textAnchor="middle" fontSize="10.700" fontFamily={MAP_FONT} fontWeight="500" fill="#222a2c" stroke="#e3eff0" strokeWidth="1.500" paintOrder="stroke">南门</text>
        <path d="M1241 315h2M1247 315.500h4M1256 314.500h6M1265 314.500h9" stroke="#9ab3b5" strokeWidth="1" opacity=".8" />
      </svg>
      <div className="relative flex h-[19px] items-center pl-[7px] pr-[6px] text-[12px] font-medium text-[#1f2a2b]">
        17:59
        <svg className="ml-[4px]" width="12" height="12" viewBox="0 0 12 12">
          <circle cx="6" cy="6" r="5.500" fill="#101516" />
          <path d="M3.500 3.500h3.800L9 6 7.500 8.500 6 7z" fill="#dff0ee" />
        </svg>
        <svg className="ml-auto" width="12" height="12" viewBox="0 0 12 12" fill="none" stroke="#1f2a2b" strokeWidth="1.200">
          <circle cx="6" cy="6.500" r="4.600" />
          <path d="M6 4v3h2M.5 2.500l2-1.800M11.500 2.500l-2-1.800" />
        </svg>
        <svg className="ml-[4px]" width="14" height="11" viewBox="0 0 14 11" fill="#1f2a2b">
          <path d="M1 7.500h2.200V11H1zM4.500 6h2.200v5H4.500zM8 3h2.200v8H8zM11.500.500h2.200V11h-2.200z" />
          <path d="M1 .500v2.300h2.300M3 .500v4M6.800 1H5v3h1.800V2.800" fill="none" stroke="#1f2a2b" strokeWidth=".7" />
        </svg>
        <svg className="mx-[3px]" width="18" height="10" viewBox="0 0 18 10">
          <rect x=".7" y=".7" width="16.600" height="8.600" rx="4" fill="none" stroke="#1f2a2b" strokeWidth="1.200" />
          <rect x="10" y="1" width="6.500" height="8" rx="2" fill="#101516" />
        </svg>
        43
      </div>
      <button className="relative mt-[8px] ml-[9px] flex h-[36px] w-[37px] items-center justify-center rounded-[9px] bg-white shadow">
        <svg width="11" height="18" viewBox="0 0 11 18" fill="none" stroke="#232528" strokeWidth="1.800">
          <path d="M10 1 1.500 9 10 17" />
        </svg>
      </button>
      <div className="relative mt-auto h-[385px] shrink-0 rounded-t-[13px] bg-linear-to-b from-[#e0e9fa] to-[#f4f7fb] to-30% px-[8px] pt-[15px]">
        <section className="h-[49px] rounded-b-[9px] bg-[#fdfefe] pl-[38px]">
          <p className="text-[12.800px] leading-[15px] text-[#404247]">去,故宫不太好停车</p>
          <a className="mt-[8px] flex items-center gap-[3px] text-[10.800px] leading-[17px] text-[#4c76b8]">
            全部43个回答
            <svg width="6" height="9" viewBox="0 0 6 9" fill="none" stroke="#4c76b8" strokeWidth="1.200">
              <path d="m1 .500 4 4-4 4" />
            </svg>
          </a>
        </section>
        <section className="mt-[7px] h-[105px] rounded-[9px] bg-[#fdfefe] px-[11px] pt-[12px]">
          <div className="flex items-center">
            <svg className="mr-[10px] ml-[2px]" width="17" height="13" viewBox="0 0 17 13">
              <path d="M0 0h6l1.500 1.500L9 0h8v3.800a2.800 2.800 0 0 0 0 5.400V13H9l-1.500-1.500L6 13H0V9.200a2.800 2.800 0 0 0 0-5.400z" fill="#5fb96b" />
              <path d="M6.500 3.500v6M10.500 3.500v6M6.500 6.500h4" stroke="#fff" strokeWidth=".7" opacity=".8" />
            </svg>
            <h3 className="text-[12.600px] leading-[18px] font-bold text-[#26282c]">高德购票 有低价不排队</h3>
          </div>
          <div className="mt-[10px] flex justify-between">
            <div>
              <div className="mt-[3px] text-[14.400px] leading-[26px]">故宫博物院门票</div>
              <div className="mt-[3px] text-[10.600px] leading-[18px] text-[#72757a]">可订明日</div>
            </div>
            <div className="flex flex-col items-end">
              <div className="flex items-baseline leading-[26px] text-[#d3683c]">
                <span className="text-[11px] font-bold">¥</span>
                <span className="text-[21px] font-bold">35.17</span>
                <span className="ml-[4px] text-[10.600px] text-[#606368]">起</span>
              </div>
              <button className="mt-[2px] h-[25px] w-[69px] rounded-full bg-linear-to-r from-[#dd7c3c] to-[#d2643f] text-[12.400px] leading-[24px] text-[#fdeee2]">立即购票</button>
            </div>
          </div>
        </section>
        <section className="mt-[7px] h-[130px] rounded-[9px] bg-[#fdfefe] px-[11px] pt-[11px]">
          <div className="flex items-center">
            <svg className="mr-[10px] ml-[2px]" width="17" height="17" viewBox="0 0 17 17" fill="none" stroke="#4a72cf" strokeWidth="1.500">
              <rect x=".9" y="1.700" width="15.200" height="14.400" rx="3" />
              <path d="M5.500 1.500h6M5 7h7M5 11h7" />
              <path d="M6 0h5v3.300H6z" fill="#4a72cf" stroke="none" />
            </svg>
            <h3 className="text-[12.500px] leading-[18px] font-bold text-[#26282c]">景区信息</h3>
          </div>
          <dl className="mt-[11px] grid grid-cols-[57.500px_1fr] gap-y-[7px] text-[12.800px] leading-[18.300px] whitespace-nowrap">
            <dt className="text-[12.500px] text-[#7f8287]">营业时间</dt>
            <dd>
              淡季11月1日-3月31日:08:30-16:30(15:40
              <br />
              停止检票)；旺季4月1日-10月31日:08:3…
            </dd>
            <dt className="text-[12.500px] text-[#7f8287]">景区电话</dt>
            <dd>
              010-85007062;010-85007057;010-8500
              <br />
              7058;010-85007063
            </dd>
          </dl>
        </section>
        <button className="mt-[25px] ml-[11px] h-[36px] w-[289px] rounded-full bg-[#dadee0] text-[14.300px] text-[#a7abae]">设为终点</button>
        <div className="absolute top-[181px] right-0 h-[56px] w-[3px] rounded-l bg-[#dfe3e8]" />
      </div>
    </div>
  );
}

export default function App() {
  return (
    <main className="flex h-[755px] w-[1474px] items-start overflow-hidden bg-[#fdfefe] pt-[44px] pl-[24px]">
      <div className="w-[306px]">
        <Title className="ml-[50px]">Weather in a<br />long journey</Title>
        <div className="mt-[11px]"><WeatherPhone /></div>
      </div>
      <div className="ml-[58px] w-[307px]">
        <Title className="ml-[56px]">Search along<br />route</Title>
        <div className="mt-[11px]"><SearchPhone /></div>
      </div>
      <div className="ml-[57px] w-[306px]">
        <Title className="ml-[61px]">Route Tips</Title>
        <div className="mt-[11px]"><NavPhone /></div>
      </div>
      <div className="ml-[58px] w-[326px]">
        <Title className="ml-[65px]">Scenic spots<br />information</Title>
        <div className="mt-[19px]"><ScenicPhone /></div>
      </div>
    </main>
  );
}
